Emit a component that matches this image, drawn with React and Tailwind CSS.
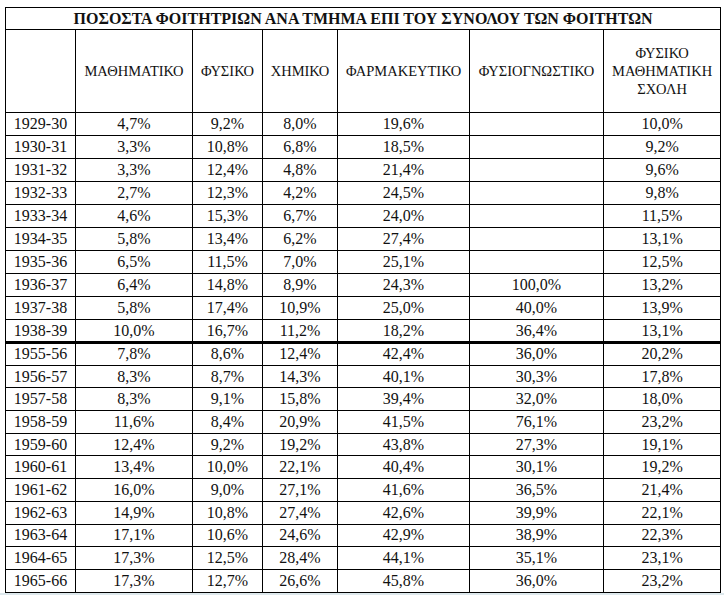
import React from 'react';

const headers = ['ΜΑΘΗΜΑΤΙΚΟ', 'ΦΥΣΙΚΟ', 'ΧΗΜΙΚΟ', 'ΦΑΡΜΑΚΕΥΤΙΚΟ', 'ΦΥΣΙΟΓΝΩΣΤΙΚΟ'];

const rows = [
  ['1929-30', '4,7%', '9,2%', '8,0%', '19,6%', '', '10,0%'],
  ['1930-31', '3,3%', '10,8%', '6,8%', '18,5%', '', '9,2%'],
  ['1931-32', '3,3%', '12,4%', '4,8%', '21,4%', '', '9,6%'],
  ['1932-33', '2,7%', '12,3%', '4,2%', '24,5%', '', '9,8%'],
  ['1933-34', '4,6%', '15,3%', '6,7%', '24,0%', '', '11,5%'],
  ['1934-35', '5,8%', '13,4%', '6,2%', '27,4%', '', '13,1%'],
  ['1935-36', '6,5%', '11,5%', '7,0%', '25,1%', '', '12,5%'],
  ['1936-37', '6,4%', '14,8%', '8,9%', '24,3%', '100,0%', '13,2%'],
  ['1937-38', '5,8%', '17,4%', '10,9%', '25,0%', '40,0%', '13,9%'],
  ['1938-39', '10,0%', '16,7%', '11,2%', '18,2%', '36,4%', '13,1%'],
  ['1955-56', '7,8%', '8,6%', '12,4%', '42,4%', '36,0%', '20,2%'],
  ['1956-57', '8,3%', '8,7%', '14,3%', '40,1%', '30,3%', '17,8%'],
  ['1957-58', '8,3%', '9,1%', '15,8%', '39,4%', '32,0%', '18,0%'],
  ['1958-59', '11,6%', '8,4%', '20,9%', '41,5%', '76,1%', '23,2%'],
  ['1959-60', '12,4%', '9,2%', '19,2%', '43,8%', '27,3%', '19,1%'],
  ['1960-61', '13,4%', '10,0%', '22,1%', '40,4%', '30,1%', '19,2%'],
  ['1961-62', '16,0%', '9,0%', '27,1%', '41,6%', '36,5%', '21,4%'],
  ['1962-63', '14,9%', '10,8%', '27,4%', '42,6%', '39,9%', '22,1%'],
  ['1963-64', '17,1%', '10,6%', '24,6%', '42,9%', '38,9%', '22,3%'],
  ['1964-65', '17,3%', '12,5%', '28,4%', '44,1%', '35,1%', '23,1%'],
  ['1965-66', '17,3%', '12,7%', '26,6%', '45,8%', '36,0%', '23,2%']
];

const App = () => {
  return (
    <div className="w-[724px] h-[595px] overflow-hidden bg-white flex flex-col font-[family-name:'Liberation_Serif','Times_New_Roman',serif] text-[#111]">
      <div className="pt-[7px] pl-[5px] flex-1">
        <table className="table-fixed border-collapse w-[715px]">
          <colgroup>
            <col className="w-[70px]" />
            <col className="w-[117px]" />
            <col className="w-[70px]" />
            <col className="w-[75px]" />
            <col className="w-[132px]" />
            <col className="w-[134px]" />
            <col className="w-[117px]" />
          </colgroup>
          <thead>
            <tr className="h-[22px]">
              <th colSpan={7} className="border border-black text-[16px] font-bold leading-[20px] text-center p-0">
                ΠΟΣΟΣΤΑ ΦΟΙΤΗΤΡΙΩΝ ΑΝΑ ΤΜΗΜΑ ΕΠΙ ΤΟΥ ΣΥΝΟΛΟΥ ΤΩΝ ΦΟΙΤΗΤΩΝ
              </th>
            </tr>
            <tr className="h-[83px]">
              <th className="border border-black p-0"></th>
              {headers.map(h => (
                <th key={h} className="border border-black font-normal text-[14.5px] leading-[18px] text-center p-0">
                  {h}
                </th>
              ))}
              <th className="border border-black font-normal text-[14.5px] leading-[18px] text-center p-0">
                ΦΥΣΙΚΟ<br />ΜΑΘΗΜΑΤΙΚΗ<br />ΣΧΟΛΗ
              </th>
            </tr>
          </thead>
          <tbody>
            {rows.map((r, i) => (
              <tr key={r[0]} className={i < 10 ? 'h-[23px]' : 'h-[22.7px]'}>
                {r.map((c, j) => (
                  <td
                    key={j}
                    className={`border border-black text-center text-[16px] leading-[18px] p-0 ${i === 10 ? 'border-t-[3px]' : ''}`}
                  >
                    {c}
                  </td>
                ))}
              </tr>
            ))}
          </tbody>
        </table>
      </div>
      <div className="h-[3px] bg-[#dde8ec]"></div>
    </div>
  );
};

export default App;
